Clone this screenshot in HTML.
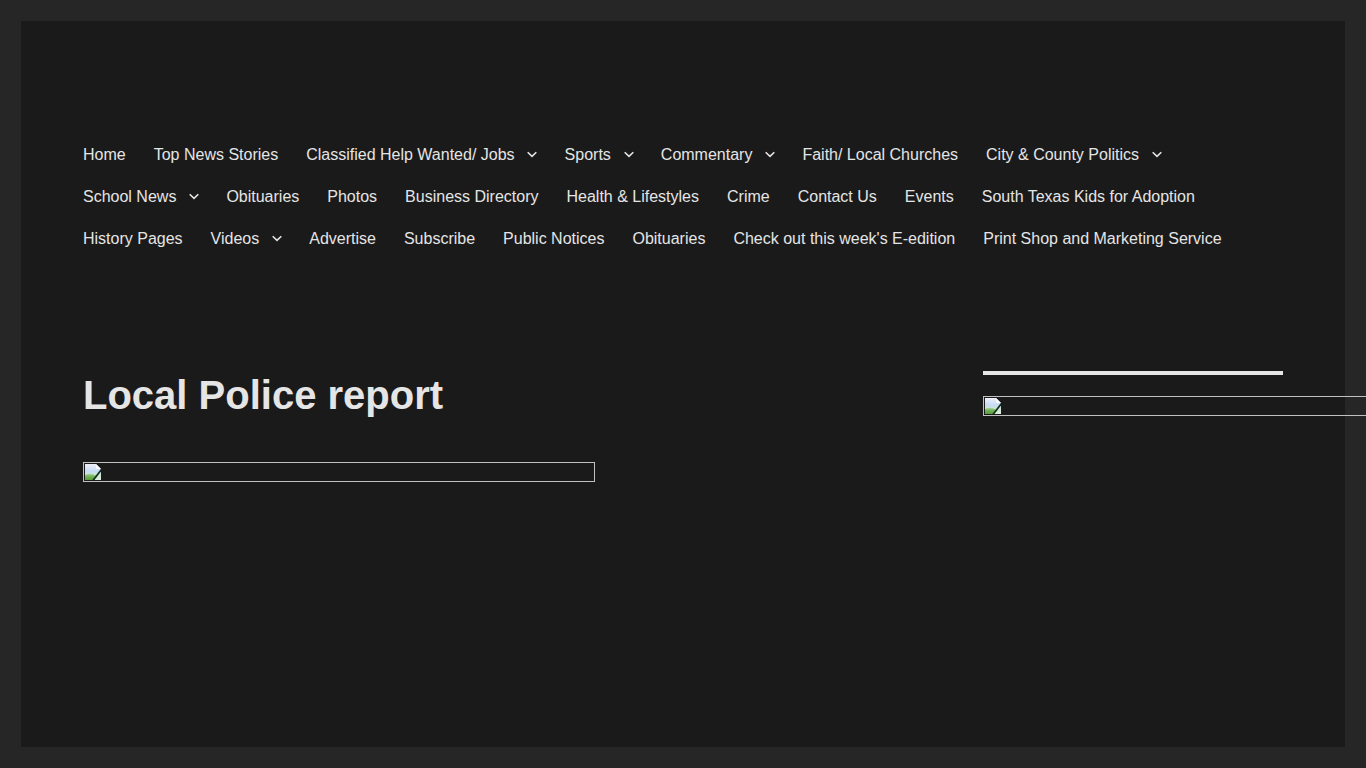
<!DOCTYPE html>
<html lang="en">
<head>
<meta charset="utf-8">
<title>Local Police report</title>
<style>
html,body{margin:0;padding:0}
html{background:#262626}
body{background:#262626;color:#e5e5e5;font-family:"Liberation Sans",Arial,Helvetica,sans-serif;font-size:16px;line-height:1.75;width:1366px;height:768px;overflow:hidden;position:relative}
.site{position:absolute;left:21px;top:21px;width:1324px;height:726px;background:#1a1a1a}
.nav{position:absolute;left:48px;top:112px;width:1240px;margin:0;padding:0;list-style:none;font-size:16px;line-height:21px}
.nav li{float:left;position:relative}
.nav a{display:block;padding:10.5px 14px;color:#e5e5e5;text-decoration:none;white-space:nowrap}
.nav li.has a{padding-right:36px}
.nav li.has svg{position:absolute;right:10.3px;top:13px;width:16px;height:16px}
.nav .br{clear:left}
h1{position:absolute;left:62px;top:352px;margin:0;font-size:40px;line-height:45px;font-weight:700;color:#e5e5e5;white-space:nowrap}
.img{position:absolute;box-sizing:border-box;border:1px solid #c0c0c0;height:20px}
.img svg{position:absolute;left:1px;top:1px;width:16px;height:16px}
.i1{left:62px;top:441px;width:512px}
.i2{left:962px;top:375px;width:383px;border-right:0}
.bar{position:absolute;left:962px;top:350px;width:300px;height:4px;background:#e5e5e5}
</style>
</head>
<body>
<div class="site">
<ul class="nav">
<li><a>Home</a></li>
<li><a>Top News Stories</a></li>
<li class="has"><a>Classified Help Wanted/ Jobs</a><svg viewBox="0 0 16 16"><path d="M3.7 6.2L8 10.4l4.300-4.200" fill="none" stroke="#e5e5e5" stroke-width="1.6"/></svg></li>
<li class="has"><a>Sports</a><svg viewBox="0 0 16 16"><path d="M3.7 6.2L8 10.4l4.300-4.200" fill="none" stroke="#e5e5e5" stroke-width="1.6"/></svg></li>
<li class="has"><a>Commentary</a><svg viewBox="0 0 16 16"><path d="M3.7 6.2L8 10.4l4.300-4.200" fill="none" stroke="#e5e5e5" stroke-width="1.6"/></svg></li>
<li><a>Faith/ Local Churches</a></li>
<li class="has"><a>City &amp; County Politics</a><svg viewBox="0 0 16 16"><path d="M3.7 6.2L8 10.4l4.300-4.200" fill="none" stroke="#e5e5e5" stroke-width="1.6"/></svg></li>
<li class="br has"><a>School News</a><svg viewBox="0 0 16 16"><path d="M3.7 6.2L8 10.4l4.300-4.200" fill="none" stroke="#e5e5e5" stroke-width="1.6"/></svg></li>
<li><a>Obituaries</a></li>
<li><a>Photos</a></li>
<li><a>Business Directory</a></li>
<li><a>Health &amp; Lifestyles</a></li>
<li><a>Crime</a></li>
<li><a>Contact Us</a></li>
<li><a>Events</a></li>
<li><a>South Texas Kids for Adoption</a></li>
<li class="br"><a>History Pages</a></li>
<li class="has"><a>Videos</a><svg viewBox="0 0 16 16"><path d="M3.7 6.2L8 10.4l4.300-4.200" fill="none" stroke="#e5e5e5" stroke-width="1.6"/></svg></li>
<li><a>Advertise</a></li>
<li><a>Subscribe</a></li>
<li><a>Public Notices</a></li>
<li><a>Obituaries</a></li>
<li><a>Check out this week's E-edition</a></li>
<li><a>Print Shop and Marketing Service</a></li>
</ul>
<h1>Local Police report</h1>
<div class="img i1"><svg viewBox="0 0 16 16"><defs><linearGradient id="g1" x1="0" y1="0" x2="0" y2="1"><stop offset="0" stop-color="#eef0f8"/><stop offset=".45" stop-color="#c6dbf5"/><stop offset=".7" stop-color="#cfe8d6"/><stop offset="1" stop-color="#dfeedd"/></linearGradient><linearGradient id="h1" x1="0" y1="0" x2="0" y2="1"><stop offset="0" stop-color="#a9d39a"/><stop offset=".5" stop-color="#6fae55"/><stop offset="1" stop-color="#5b9e3f"/></linearGradient></defs><path d="M0 0h11l5 5V16H0z" fill="url(#g1)"/><path d="M0 16v-5q5-2.500 9.500 0L12 12l-3.500 4z" fill="url(#h1)"/><path d="M11 0l5 5h-4q-1 0-1-1z" fill="#fbfbfd"/><path d="M16.500 5.500L8 16.500" stroke="#15301a" stroke-width="1.800" fill="none"/></svg></div>
<div class="bar"></div>
<div class="img i2"><svg viewBox="0 0 16 16"><defs><linearGradient id="g2" x1="0" y1="0" x2="0" y2="1"><stop offset="0" stop-color="#eef0f8"/><stop offset=".45" stop-color="#c6dbf5"/><stop offset=".7" stop-color="#cfe8d6"/><stop offset="1" stop-color="#dfeedd"/></linearGradient><linearGradient id="h2" x1="0" y1="0" x2="0" y2="1"><stop offset="0" stop-color="#a9d39a"/><stop offset=".5" stop-color="#6fae55"/><stop offset="1" stop-color="#5b9e3f"/></linearGradient></defs><path d="M0 0h11l5 5V16H0z" fill="url(#g2)"/><path d="M0 16v-5q5-2.500 9.500 0L12 12l-3.500 4z" fill="url(#h2)"/><path d="M11 0l5 5h-4q-1 0-1-1z" fill="#fbfbfd"/><path d="M16.500 5.500L8 16.500" stroke="#15301a" stroke-width="1.800" fill="none"/></svg></div>
</div>
</body>
</html>
